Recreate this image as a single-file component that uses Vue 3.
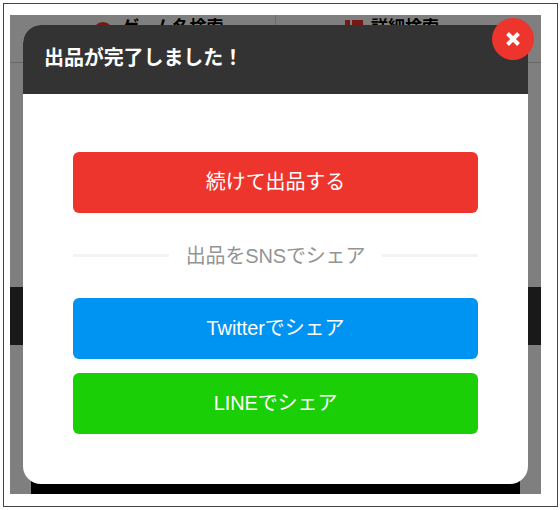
<template>
  <div class="frame">
    <div class="screen">
      <div class="page">
        <div class="tabs">
          <div class="tab left">
            <span class="tab-icon round"></span>
            <span>ゲーム名検索</span>
          </div>
          <div class="tab right">
            <svg class="tab-icon-svg" width="18" height="20" viewBox="0 0 18 20">
              <rect width="5" height="5" fill="#e8322c" />
              <rect x="7" width="11" height="5" fill="#e8322c" />
              <rect y="7" width="5" height="5" fill="#e8322c" />
              <rect x="7" y="7" width="11" height="5" fill="#e8322c" />
            </svg>
            <span>詳細検索</span>
          </div>
        </div>
        <div class="band"></div>
        <div class="footer-block"></div>
      </div>
      <div class="overlay"></div>
      <div class="modal">
        <div class="modal-head">出品が完了しました！</div>
        <div class="modal-body">
          <button class="btn red">続けて出品する</button>
          <div class="divider"><span>出品をSNSでシェア</span></div>
          <button class="btn blue">Twitterでシェア</button>
          <button class="btn green">LINEでシェア</button>
        </div>
        <div class="close">
          <svg width="16" height="16" viewBox="0 0 16 16">
            <path d="M2.5 2.5 13.5 13.5M13.5 2.5 2.5 13.5" stroke="#fff" stroke-width="4" fill="none" />
          </svg>
        </div>
      </div>
    </div>
  </div>
</template>

<script setup>
</script>

<style>
html,
body {
  margin: 0;
  background: #fff;
}
</style>

<style scoped>
.frame {
  box-sizing: border-box;
  width: 555px;
  height: 504px;
  margin: 3px 0 0 3px;
  padding: 11px 15px 12px 6px;
  border: 1px solid #444;
  font-family: "Liberation Sans", "Noto Sans CJK JP", sans-serif;
}

.screen {
  position: relative;
  height: 479px;
  width: 531px;
  overflow: hidden;
}

.page {
  display: flex;
  flex-direction: column;
  height: 100%;
  background: #fff;
}

.tabs {
  display: flex;
  height: 47px;
  border-bottom: 1px solid #ccc;
}

.tab {
  display: flex;
  align-items: flex-start;
  box-sizing: border-box;
  padding-top: 3px;
  line-height: 20px;
  font-size: 17px;
  font-weight: bold;
  color: #000;
}

.tab.left {
  width: 265px;
  padding-left: 83px;
  gap: 9px;
}

.tab.right {
  flex: 1;
  padding-left: 69px;
  gap: 8px;
  border-left: 1px solid #ddd;
}

.tab-icon {
  width: 20px;
  height: 20px;
  margin-top: 4px;
  background: #e8322c;
}

.tab-icon.round {
  border-radius: 50%;
}

.tab-icon-svg {
  margin-top: 2px;
}

.band {
  height: 58px;
  margin-top: 224px;
  background: #333;
}

.footer-block {
  height: 40px;
  margin: 109px 21px 0;
  background: #000;
}

.overlay {
  position: absolute;
  inset: 0;
  background: rgba(0, 0, 0, 0.5);
}

.modal {
  position: absolute;
  left: 13px;
  top: 10px;
  width: 505px;
  height: 459px;
  display: flex;
  flex-direction: column;
  border-radius: 18px;
  background: #fff;
}

.modal-head {
  height: 69px;
  padding-left: 21px;
  line-height: 67px;
  font-size: 20px;
  font-weight: bold;
  letter-spacing: -0.1px;
  color: #fff;
  background: #333;
  border-radius: 18px 18px 0 0;
}

.modal-body {
  display: flex;
  flex-direction: column;
  padding: 58px 50px 0;
}

.btn {
  height: 61px;
  padding: 0 0 5px;
  border: 0;
  border-radius: 6px;
  font-family: inherit;
  font-size: 20px;
  letter-spacing: -0.1px;
  color: #fff;
}

.red {
  background: #ee352d;
}

.blue {
  background: #0094f2;
}

.green {
  margin-top: 14px;
  background: #1acf05;
}

.divider {
  display: flex;
  align-items: center;
  justify-content: center;
  gap: 17px;
  height: 85px;
  font-size: 20px;
  letter-spacing: -0.15px;
  color: #949494;
}

.divider span {
  position: relative;
  top: -1px;
}

.divider::before,
.divider::after {
  content: "";
  flex: 1;
  height: 3px;
  background: #f3f3f3;
}

.close {
  position: absolute;
  right: -6px;
  top: -7px;
  width: 42px;
  height: 42px;
  display: flex;
  align-items: center;
  justify-content: center;
  border-radius: 50%;
  background: #ee352d;
}
</style>
